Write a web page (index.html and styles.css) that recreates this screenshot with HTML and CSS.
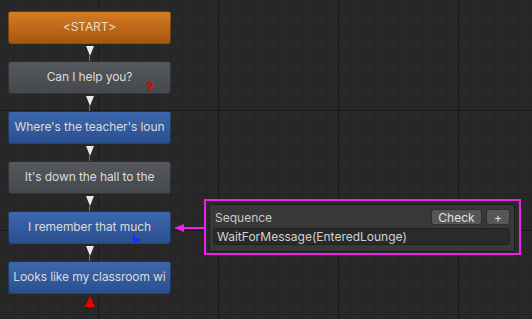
FILE: index.html
```html
<!DOCTYPE html>
<html lang="en">
<head>
  <meta charset="UTF-8" />
  <title>Dialogue Graph</title>
  <link rel="stylesheet" href="styles.css">
</head>
<body>
  <div class="canvas">
    <div class="chain">
      <div class="node node-start"><span class="label">&lt;START&gt;</span></div>
      <div class="link"><span class="arrow"></span></div>
      <div class="node node-npc">
        <span class="label">Can I help you?</span>
        <span class="mark-question">?</span>
      </div>
      <div class="link"><span class="arrow"></span></div>
      <div class="node node-pc"><span class="label">Where's the teacher's loun</span></div>
      <div class="link"><span class="arrow"></span></div>
      <div class="node node-npc"><span class="label">It's down the hall to the</span></div>
      <div class="link"><span class="arrow"></span></div>
      <div class="node node-pc">
        <span class="label">I remember that much</span>
        <svg class="mark-flag" width="8" height="9" viewBox="0 0 8 9"><path d="M0 0h2v3.5l6 2.5-6 2.5V9H0z" fill="#1a2dff"/></svg>
      </div>
      <div class="link"><span class="arrow"></span></div>
      <div class="node node-pc"><span class="label">Looks like my classroom wi</span></div>
      <div class="link-up"><span class="arrow-up"></span></div>
    </div>

    <div class="pointer">
      <span class="pointer-head"></span>
      <span class="pointer-line"></span>
    </div>

    <div class="inspector">
      <div class="inspector-body">
        <div class="inspector-row">
          <span class="inspector-title">Sequence</span>
          <button class="btn btn-check">Check</button>
          <button class="btn btn-add">+</button>
        </div>
        <div class="field">WaitForMessage(EnteredLounge)</div>
      </div>
    </div>
  </div>
</body>
</html>
```

FILE: styles.css
```css
html, body { margin: 0; padding: 0; }
body {
  width: 532px; height: 319px; overflow: hidden;
  font-family: Inter, "Noto Sans", sans-serif; font-size: 12px;
  background-color: #282828;
  background-image:
    linear-gradient(to right, #191919 1px, transparent 1px),
    linear-gradient(to bottom, #191919 1px, transparent 1px),
    linear-gradient(to right, #222 1px, transparent 1px),
    linear-gradient(to bottom, #222 1px, transparent 1px);
  background-size: 120px 120px, 120px 120px, 12px 12px, 12px 12px;
  background-position: 98px 0, 0 110px, 2px 0, 0 2px;
}
.canvas { position: relative; width: 532px; height: 319px; }

.chain { display: flex; flex-direction: column; width: 163px; padding: 11px 0 0 8px; }
.node {
  position: relative; height: 33px; box-sizing: border-box;
  display: flex; align-items: center;
  border-radius: 3px; border: 1px solid rgba(0,0,0,0.35);
  padding: 0 2px 2px 2px; color: #dcdcdc; overflow: hidden;
}
.label { display: block; width: 100%; text-align: center; white-space: nowrap; letter-spacing: -0.1px; }
.node-start { background: linear-gradient(#d67b22, #a6570e); color: #eadccd; }
.node-npc { background: linear-gradient(#55585d, #45484c); }
.node-pc { background: linear-gradient(#3d68ad, #2a4f8e); }

.link { height: 17px; display: flex; flex-direction: column; align-items: center; }
.arrow {
  width: 0; height: 0; margin-top: 2px;
  border-left: 4px solid transparent; border-right: 4px solid transparent;
  border-top: 10px solid #e8e8e8;
}
.link::after { content: ""; width: 1px; flex: 1; background: #7a7a7a; }
.link-up { height: 25px; display: flex; justify-content: center; align-items: flex-end; }
.arrow-up {
  width: 0; height: 0; margin-bottom: 12px;
  border-left: 5.5px solid transparent; border-right: 5.5px solid transparent;
  border-bottom: 11px solid #f20000;
}

.mark-question {
  position: absolute; left: 137px; top: 19px;
  color: #e00000; font-weight: 800; font-size: 13px; line-height: 12px;
}
.mark-flag { position: absolute; left: 124px; top: 22px; }

.pointer { position: absolute; left: 174px; top: 223px; display: flex; align-items: center; height: 10px; }
.pointer-head {
  width: 0; height: 0;
  border-top: 4.5px solid transparent; border-bottom: 4.5px solid transparent;
  border-right: 10px solid #f01ee8;
}
.pointer-line { width: 21px; height: 2px; background: #f01ee8; }

.inspector {
  position: absolute; left: 204px; top: 199px; width: 317px; height: 56px;
  box-sizing: border-box; border: 2px solid #f01ee8; background: #2b2b2b;
  padding: 3px 4px 1px 3px;
}
.inspector-body {
  height: 100%; box-sizing: border-box;
  background: #383838; border: 1px solid #1e1e1e; border-radius: 2px;
  padding: 4px 4px 0 3px;
}
.inspector-row { display: flex; align-items: center; height: 16px; gap: 4px; }
.inspector-title { flex: 1; color: #c8c8c8; padding-left: 2px; padding-top: 1px; }
.btn {
  height: 16px; box-sizing: border-box; padding: 0; margin: 0;
  font-family: Inter, "Noto Sans", sans-serif; font-size: 12px; color: #e0e0e0;
  background: #565656; border: 1px solid #2e2e2e; border-radius: 3px;
  line-height: 13px;
}
.btn-check { width: 51px; }
.btn-add { width: 24px; }
.field {
  margin-top: 3px; height: 17px; box-sizing: border-box;
  background: #2a2a2a; border: 1px solid #212121; border-radius: 3px;
  color: #d2d2d2; padding: 0 3px; line-height: 15px; white-space: nowrap;
}
```
